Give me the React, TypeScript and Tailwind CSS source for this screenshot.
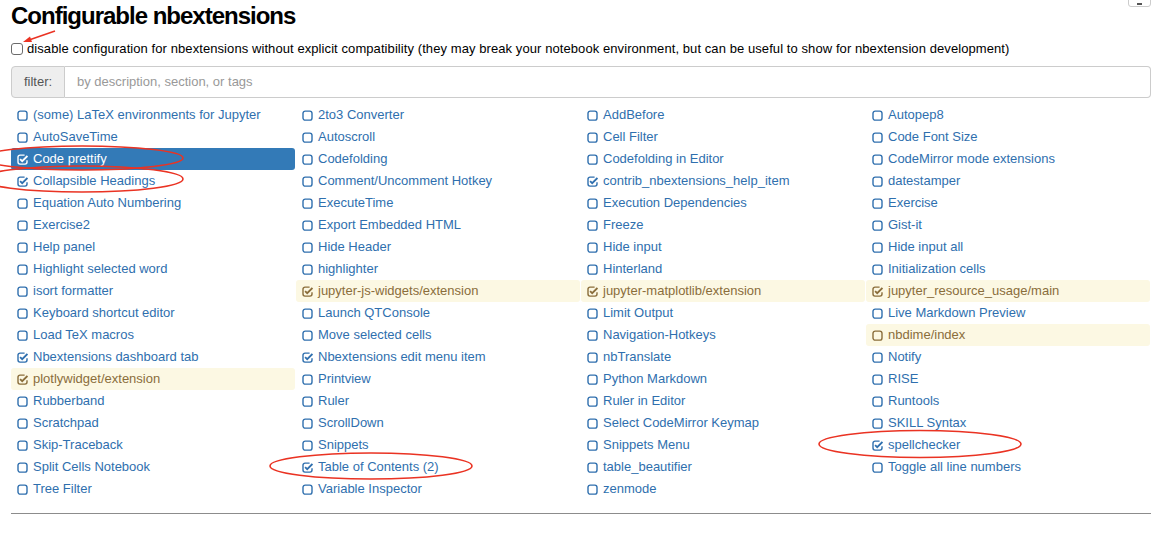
import React from "react";

type Ext = { name: string; on?: boolean; sel?: boolean; warn?: boolean };

// row-major, like the bootstrap float list
const extensions: Ext[] = [
  { name: "(some) LaTeX environments for Jupyter" },
  { name: "2to3 Converter" },
  { name: "AddBefore" },
  { name: "Autopep8" },
  { name: "AutoSaveTime" },
  { name: "Autoscroll" },
  { name: "Cell Filter" },
  { name: "Code Font Size" },
  { name: "Code prettify", on: true, sel: true },
  { name: "Codefolding" },
  { name: "Codefolding in Editor" },
  { name: "CodeMirror mode extensions" },
  { name: "Collapsible Headings", on: true },
  { name: "Comment/Uncomment Hotkey" },
  { name: "contrib_nbextensions_help_item", on: true },
  { name: "datestamper" },
  { name: "Equation Auto Numbering" },
  { name: "ExecuteTime" },
  { name: "Execution Dependencies" },
  { name: "Exercise" },
  { name: "Exercise2" },
  { name: "Export Embedded HTML" },
  { name: "Freeze" },
  { name: "Gist-it" },
  { name: "Help panel" },
  { name: "Hide Header" },
  { name: "Hide input" },
  { name: "Hide input all" },
  { name: "Highlight selected word" },
  { name: "highlighter" },
  { name: "Hinterland" },
  { name: "Initialization cells" },
  { name: "isort formatter" },
  { name: "jupyter-js-widgets/extension", on: true, warn: true },
  { name: "jupyter-matplotlib/extension", on: true, warn: true },
  { name: "jupyter_resource_usage/main", on: true, warn: true },
  { name: "Keyboard shortcut editor" },
  { name: "Launch QTConsole" },
  { name: "Limit Output" },
  { name: "Live Markdown Preview" },
  { name: "Load TeX macros" },
  { name: "Move selected cells" },
  { name: "Navigation-Hotkeys" },
  { name: "nbdime/index", warn: true },
  { name: "Nbextensions dashboard tab", on: true },
  { name: "Nbextensions edit menu item", on: true },
  { name: "nbTranslate" },
  { name: "Notify" },
  { name: "plotlywidget/extension", on: true, warn: true },
  { name: "Printview" },
  { name: "Python Markdown" },
  { name: "RISE" },
  { name: "Rubberband" },
  { name: "Ruler" },
  { name: "Ruler in Editor" },
  { name: "Runtools" },
  { name: "Scratchpad" },
  { name: "ScrollDown" },
  { name: "Select CodeMirror Keymap" },
  { name: "SKILL Syntax" },
  { name: "Skip-Traceback" },
  { name: "Snippets" },
  { name: "Snippets Menu" },
  { name: "spellchecker", on: true },
  { name: "Split Cells Notebook" },
  { name: "Table of Contents (2)", on: true },
  { name: "table_beautifier" },
  { name: "Toggle all line numbers" },
  { name: "Tree Filter" },
  { name: "Variable Inspector" },
  { name: "zenmode" },
];

function CheckIcon({ on }: { on?: boolean }) {
  return (
    <svg width="11" height="11" viewBox="0 0 11 11" fill="none" stroke="currentColor" className="shrink-0">
      {on ? (
        <>
          <path d="M7.6 1.1H3A2 2 0 0 0 1 3.1v5A2 2 0 0 0 3 10.1h5A2 2 0 0 0 10 8.1V6.2" strokeWidth="1.4" />
          <path d="M3.1 5.1l2.1 2.1L10.4 2" strokeWidth="1.8" />
        </>
      ) : (
        <rect x="1" y="1.1" width="9" height="9" rx="2.2" strokeWidth="1.4" />
      )}
    </svg>
  );
}

export default function App() {
  return (
    <div className="relative w-[1168px] h-[535px] overflow-hidden bg-white font-['Liberation_Sans',Arial,sans-serif] text-[13px] text-[#333]">
      {/* button cut off at the top edge */}
      <div className="absolute left-[1128px] top-[-14px] w-[23px] h-[21px] border border-[#ccc] rounded-[3px] bg-white">
        <div className="absolute left-[8px] top-[16px] w-[5px] h-[2px] bg-[#555]" />
      </div>

      <div className="ml-[11px] w-[1140px]">
        <h2 className="h-[32px] leading-[32px] text-[24px] font-bold tracking-[-1px] text-black">Configurable nbextensions</h2>

        <label className="mt-[10px] h-[14px] flex items-center gap-[4px] text-black">
          <span className="w-[12px] h-[12px] rounded-[3px] border border-[#6b6b6b] bg-white shrink-0" />
          <span className="whitespace-nowrap tracking-[0.08px]">
            disable configuration for nbextensions without explicit compatibility (they may break your notebook environment, but can be useful to show for nbextension development)
          </span>
        </label>

        <div className="mt-[10px] h-[32px] flex">
          <div className="w-[54px] flex items-center justify-center bg-[#eee] border border-[#ccc] rounded-l-[4px] text-[#555]">
            filter:
          </div>
          <div className="flex-1 flex items-center pl-[12px] border border-l-0 border-[#ccc] rounded-r-[4px] text-[#999]">
            by description, section, or tags
          </div>
        </div>

        <ul className="mt-[6px] grid grid-cols-4">
          {extensions.map((ext) => (
            <li key={ext.name} className="pr-[1px]">
              <div
                className={`h-[22px] flex items-center gap-[5px] pl-[6px] rounded-[3px] ${
                  ext.sel ? "bg-[#337ab7] text-white" : ext.warn ? "bg-[#fcf8e3] text-[#8a6d3b]" : "text-[#2f6fae]"
                }`}
              >
                <CheckIcon on={ext.on} />
                <span className="whitespace-nowrap">{ext.name}</span>
              </div>
            </li>
          ))}
        </ul>

        <hr className="mt-[13px] border-0 border-t border-[#8c8c8c]" />
      </div>

      {/* red annotations drawn on the screenshot */}
      <svg className="absolute inset-0 pointer-events-none" width="1168" height="535" fill="none" stroke="#ea3323" strokeWidth="1.6">
        <ellipse cx="82" cy="158" rx="101" ry="12" />
        <ellipse cx="82" cy="179" rx="101" ry="13" />
        <ellipse cx="371" cy="466" rx="101" ry="13" />
        <ellipse cx="920" cy="444" rx="101" ry="13.5" />
        <path d="M55 31L29 40" />
        <path d="M23 42L30 36.5L32 42Z" fill="#ea3323" stroke="none" />
      </svg>
    </div>
  );
}
